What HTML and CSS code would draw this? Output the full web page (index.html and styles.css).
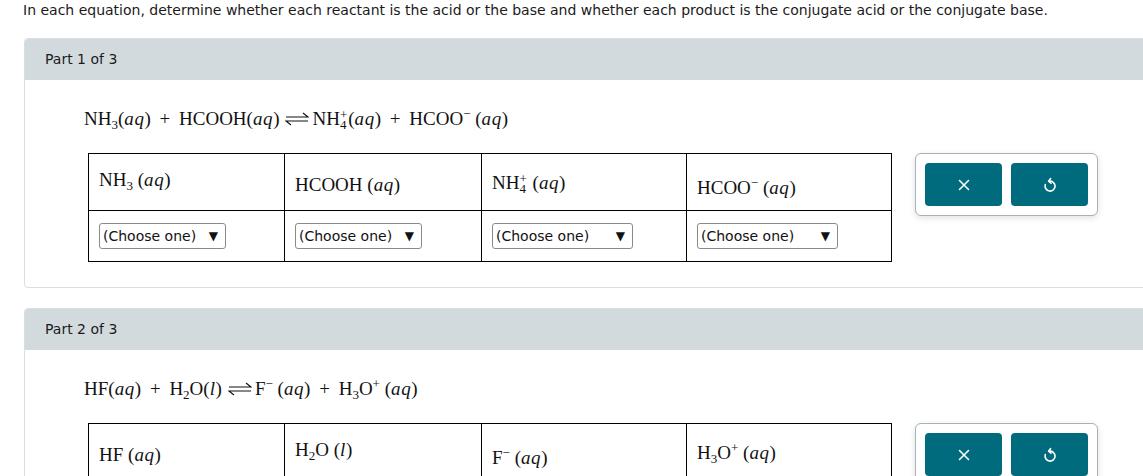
FILE: index.html
```html
<!DOCTYPE html>
<html>
<head>
<meta charset="utf-8">
<link rel="stylesheet" href="styles.css">
</head>
<body>
<div class="page">
  <p class="intro">In each equation, determine whether each reactant is the acid or the base and whether each product is the conjugate acid or the conjugate base.</p>

  <section class="card">
    <div class="card-head">Part 1 of 3</div>
    <div class="card-body">
      <div class="eq">NH<span class="sub">3</span>(<i>aq</i>) <span class="op">+</span> HCOOH(<i>aq</i>)<svg class="arrow" width="24" height="14" viewBox="0 0 24 14"><path d="M1 5 H23 L18 1 M23 9 H1 L6 13" stroke="#111" stroke-width="1.1" fill="none"/></svg>NH<span class="ss"><span class="up">+</span><span class="dn">4</span></span>(<i>aq</i>) <span class="op">+</span> HCOO<span class="sup">−</span> (<i>aq</i>)</div>
      <div class="work">
        <table class="grid">
          <tr class="hrow">
            <td class="c1"><span class="chem">NH<span class="sub">3</span> (<i>aq</i>)</span></td>
            <td class="c2"><span class="chem low">HCOOH (<i>aq</i>)</span></td>
            <td class="c3"><span class="chem">NH<span class="ss"><span class="up">+</span><span class="dn">4</span></span> (<i>aq</i>)</span></td>
            <td class="c4"><span class="chem low">HCOO<span class="sup">−</span> (<i>aq</i>)</span></td>
          </tr>
          <tr class="srow">
            <td><div class="sel s-narrow"><span>(Choose one)</span><span class="tri">▼</span></div></td>
            <td><div class="sel s-narrow"><span>(Choose one)</span><span class="tri">▼</span></div></td>
            <td><div class="sel s-wide"><span>(Choose one)</span><span class="tri">▼</span></div></td>
            <td><div class="sel s-wide"><span>(Choose one)</span><span class="tri">▼</span></div></td>
          </tr>
        </table>
        <div class="tools">
          <button class="btn" aria-label="Clear"><svg width="14" height="14" viewBox="0 0 14 14"><path d="M2.5 2.5 L11.5 11.5 M11.5 2.5 L2.5 11.5" stroke="#fff" stroke-width="1.6" stroke-linecap="round" fill="none"/></svg></button>
          <button class="btn" aria-label="Reset"><svg width="14" height="16" viewBox="0 0 14 16"><path d="M6.2 4.2 A5 5 0 1 1 2.3 7.6" stroke="#fff" stroke-width="1.6" fill="none" stroke-linecap="round"/><path d="M7.6 1.6 L5.6 4.2 L8 6.2" stroke="#fff" stroke-width="1.6" fill="none" stroke-linecap="round" stroke-linejoin="round"/></svg></button>
        </div>
      </div>
    </div>
  </section>

  <section class="card">
    <div class="card-head">Part 2 of 3</div>
    <div class="card-body">
      <div class="eq">HF(<i>aq</i>) <span class="op">+</span> H<span class="sub">2</span>O(<i>l</i>)<svg class="arrow" width="24" height="14" viewBox="0 0 24 14"><path d="M1 5 H23 L18 1 M23 9 H1 L6 13" stroke="#111" stroke-width="1.1" fill="none"/></svg>F<span class="sup">−</span> (<i>aq</i>) <span class="op">+</span> H<span class="sub">3</span>O<span class="sup">+</span> (<i>aq</i>)</div>
      <div class="work">
        <table class="grid">
          <tr class="hrow">
            <td class="c1"><span class="chem low">HF (<i>aq</i>)</span></td>
            <td class="c2"><span class="chem">H<span class="sub">2</span>O (<i>l</i>)</span></td>
            <td class="c3"><span class="chem low">F<span class="sup">−</span> (<i>aq</i>)</span></td>
            <td class="c4"><span class="chem">H<span class="sub">3</span>O<span class="sup">+</span> (<i>aq</i>)</span></td>
          </tr>
          <tr class="srow">
            <td><div class="sel s-narrow"><span>(Choose one)</span><span class="tri">▼</span></div></td>
            <td><div class="sel s-narrow"><span>(Choose one)</span><span class="tri">▼</span></div></td>
            <td><div class="sel s-wide"><span>(Choose one)</span><span class="tri">▼</span></div></td>
            <td><div class="sel s-wide"><span>(Choose one)</span><span class="tri">▼</span></div></td>
          </tr>
        </table>
        <div class="tools">
          <button class="btn" aria-label="Clear"><svg width="14" height="14" viewBox="0 0 14 14"><path d="M2.5 2.5 L11.5 11.5 M11.5 2.5 L2.5 11.5" stroke="#fff" stroke-width="1.6" stroke-linecap="round" fill="none"/></svg></button>
          <button class="btn" aria-label="Reset"><svg width="14" height="16" viewBox="0 0 14 16"><path d="M6.2 4.2 A5 5 0 1 1 2.3 7.6" stroke="#fff" stroke-width="1.6" fill="none" stroke-linecap="round"/><path d="M7.6 1.6 L5.6 4.2 L8 6.2" stroke="#fff" stroke-width="1.6" fill="none" stroke-linecap="round" stroke-linejoin="round"/></svg></button>
        </div>
      </div>
    </div>
  </section>
</div>
</body>
</html>
```

FILE: styles.css
```css
html {
  overflow: hidden;
}
body {
  margin: 0;
  font-family: "DejaVu Sans", Verdana, sans-serif;
  font-size: 14px;
  color: #1b1b1b;
  background: #fff;
}
.page {
  padding: 2px 0 0 23px;
}
.intro {
  margin: 0;
  line-height: 17px;
}
.card {
  width: 1160px;
  margin: 19px 0 0 1px;
  border: 1px solid #d8dfe2;
  border-radius: 4px;
}
.card + .card {
  margin-top: 20px;
}
.card-head {
  height: 41px;
  line-height: 41px;
  padding-left: 20px;
  background: #d2dadd;
  border-radius: 3px 3px 0 0;
}
.card-body {
  padding: 21px 0 25px 59px;
}
.eq {
  font-family: "Liberation Serif", "DejaVu Serif", serif;
  font-size: 19px;
  line-height: 26px;
  height: 26px;
  white-space: nowrap;
  color: #111;
}
.eq i, .chem i {
  font-style: italic;
  letter-spacing: 0.6px;
}
.op {
  margin: 0 4px;
}
.arrow {
  margin: 0 3px 0 6px;
  vertical-align: -1px;
}
.sub {
  font-size: 13px;
  vertical-align: -4px;
}
.sup {
  font-size: 13px;
  vertical-align: 7px;
}
.ss {
  display: inline-flex;
  flex-direction: column;
  font-size: 13px;
  line-height: 10px;
  vertical-align: 6px;
  margin-right: 1px;
}
.work {
  display: flex;
  align-items: flex-start;
  gap: 23px;
  margin: 26px 0 0 4px;
}
.grid {
  border-collapse: collapse;
}
.grid td {
  border: 1px solid #000;
  padding: 0 0 0 10px;
  vertical-align: middle;
}
.hrow td {
  height: 56px;
}
.srow td {
  height: 50px;
}
.c1 { width: 185px; }
.c2 { width: 186px; }
.c3 { width: 194px; }
.c4 { width: 194px; }
.chem {
  font-family: "Liberation Serif", "DejaVu Serif", serif;
  font-size: 19px;
  line-height: 26px;
  color: #111;
  white-space: nowrap;
  position: relative;
  top: 1px;
}
.chem.low {
  top: 3px;
}
.sel {
  display: flex;
  align-items: center;
  justify-content: space-between;
  box-sizing: border-box;
  height: 26px;
  padding: 0 7px 0 3px;
  border: 1px solid #8a8a8a;
  border-radius: 3px;
  font-size: 14px;
  color: #111;
  background: #fff;
}
.s-narrow { width: 127px; }
.s-wide { width: 141px; }
.tri {
  font-size: 12px;
}
.tools {
  display: flex;
  gap: 9px;
  padding: 9px;
  border: 1px solid #a4b3ba;
  border-radius: 6px;
  box-shadow: 0 2px 6px rgba(0, 0, 0, 0.12);
  background: #fff;
}
.btn {
  width: 77px;
  height: 43px;
  border: 0;
  border-radius: 4px;
  background: #006b7c;
  display: flex;
  align-items: center;
  justify-content: center;
  padding: 0;
}
```
